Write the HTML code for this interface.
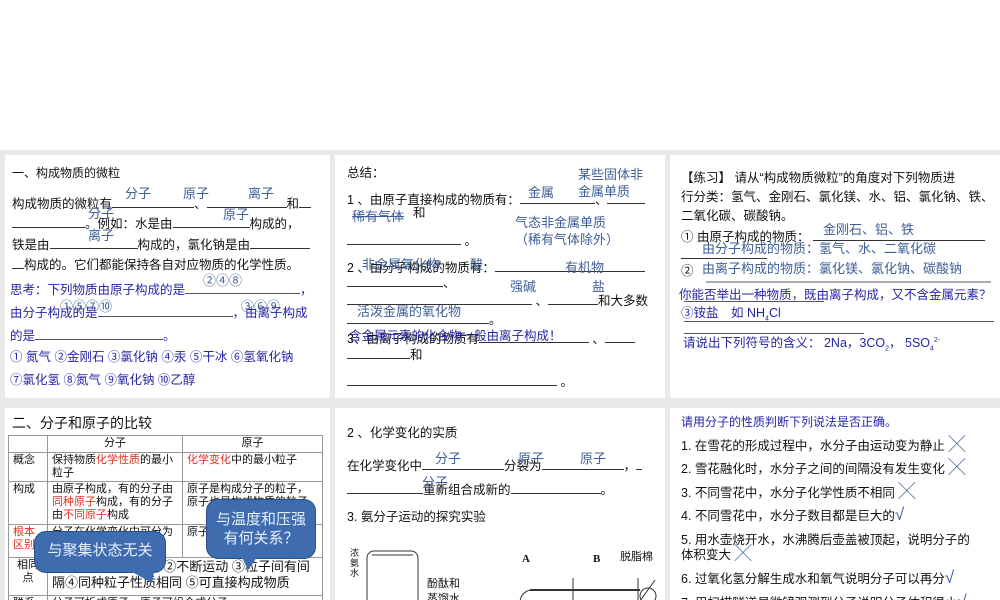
<!DOCTYPE html>
<html><head><meta charset="utf-8"><style>
body{margin:0;width:1000px;height:600px;background:#fff;position:relative;overflow:hidden;font-family:"Liberation Sans","Noto Sans CJK SC",sans-serif;color:#111}
.bg{position:absolute;left:0;top:150px;width:1000px;height:450px;background:#e9e9e9}
.p{position:absolute;background:#fff;overflow:hidden}
.t{position:absolute;white-space:nowrap;font-size:12.5px;line-height:16px}
.a{color:#3f5f96;font-size:13px}
.n{color:#2626a6}
.m{color:#3f5f96;font-size:17px;line-height:14px;font-weight:300}
u{text-decoration:none;border-bottom:1px solid #333;display:inline-block;height:13px;vertical-align:baseline}
table{position:absolute;border-collapse:collapse;font-size:11px;line-height:13px}
td{border:1px solid #999;padding:1px 4px;vertical-align:top}
.r{color:#e03020}
.bub{position:absolute;background:#3e6cae;border-radius:12px;color:#e6eeff;font-size:15px;text-align:center;border:1px solid #2b4f86}
</style></head><body>
<div class="bg"></div>

<!-- Panel 1 -->
<div class="p" style="left:5px;top:155px;width:325px;height:243px">
<div class="t" style="left:7px;top:10px;font-size:12px">一、构成物质的微粒</div>
<div class="t" style="left:7px;top:39px">构成物质的微粒有<u style="width:82px"></u>、<u style="width:80px"></u>和<u style="width:12px"></u></div>
<div class="t a" style="left:120px;top:31px">分子</div><div class="t a" style="left:178px;top:31px">原子</div><div class="t a" style="left:243px;top:31px">离子</div>
<div class="t" style="left:7px;top:59px"><u style="width:73px"></u>。例如：水是由<u style="width:77px"></u>构成的，</div>
<div class="t a" style="left:83px;top:51px">分子</div><div class="t a" style="left:218px;top:52px">原子</div>
<div class="t" style="left:7px;top:80px">铁是由<u style="width:88px"></u>构成的，氯化钠是由<u style="width:60px"></u></div>
<div class="t a" style="left:83px;top:73px">离子</div>
<div class="t" style="left:7px;top:100px"><u style="width:12px"></u>构成的。它们都能保持各自对应物质的化学性质。</div>
<div class="t n" style="left:5px;top:125px">思考：下列物质由原子构成的是<u style="width:115px;border-color:#555"></u>，</div>
<div class="t a" style="left:198px;top:118px">②④⑧</div>
<div class="t n" style="left:5px;top:148px">由分子构成的是<u style="width:135px;border-color:#555"></u>，由离子构成</div>
<div class="t a" style="left:55px;top:144px">①⑤⑦⑩</div><div class="t a" style="left:236px;top:144px">③⑥⑨</div>
<div class="t n" style="left:5px;top:171px">的是<u style="width:128px;border-color:#555"></u>。</div>
<div class="t n" style="left:5px;top:194px">① 氮气 ②金刚石 ③氯化钠 ④汞 ⑤干冰 ⑥氢氧化钠</div>
<div class="t n" style="left:5px;top:217px">⑦氯化氢 ⑧氮气 ⑨氧化钠 ⑩乙醇</div>
</div>

<!-- Panel 2 -->
<div class="p" style="left:335px;top:155px;width:330px;height:243px">
<div class="t" style="left:12px;top:10px">总结：</div>
<div class="t a" style="left:243px;top:12px">某些固体非</div><div class="t a" style="left:243px;top:29px">金属单质</div>
<div class="t" style="left:12px;top:35px">1 、由原子直接构成的物质有：<u style="width:75px"></u>、<u style="width:38px"></u></div>
<div class="t a" style="left:193px;top:30px">金属</div>
<div class="t a" style="left:17px;top:54px;text-decoration:line-through">稀有气体</div><div class="t" style="left:78px;top:50px">和</div>
<div class="t a" style="left:180px;top:60px">气态非金属单质</div><div class="t a" style="left:180px;top:77px">（稀有气体除外）</div>
<div class="t" style="left:12px;top:76px"><u style="width:114px"></u> 。</div>
<div class="t" style="left:12px;top:103px">2 、由分子构成的物质有：<u style="width:150px"></u></div>
<div class="t a" style="left:27px;top:102px">非金属氧化物</div><div class="t a" style="left:135px;top:102px">酸</div><div class="t a" style="left:230px;top:105px">有机物</div>
<div class="t" style="left:12px;top:118px"><u style="width:96px"></u>、</div>
<div class="t a" style="left:175px;top:124px">强碱</div><div class="t a" style="left:257px;top:124px">盐</div>
<div class="t" style="left:12px;top:136px"><u style="width:185px"></u> 、<u style="width:50px"></u>和大多数</div>
<div class="t a" style="left:22px;top:149px">活泼金属的氧化物</div>
<div class="t" style="left:12px;top:155px"><u style="width:142px"></u>。</div>
<div class="t" style="left:12px;top:174px">3、由离子构成的物质有<u style="width:110px"></u> 、<u style="width:30px"></u></div>
<div class="t n" style="left:14px;top:173px">含金属元素的化合物一般由离子构成！</div>
<div class="t" style="left:12px;top:190px"><u style="width:63px"></u>和</div>
<div class="t" style="left:12px;top:217px"><u style="width:210px"></u> 。</div>
</div>

<!-- Panel 3 -->
<div class="p" style="left:670px;top:155px;width:330px;height:243px">
<div class="t" style="left:11px;top:15px">【练习】 请从“构成物质微粒”的角度对下列物质进</div>
<div class="t" style="left:11px;top:34px">行分类：氢气、金刚石、氯化镁、水、铝、氯化钠、铁、</div>
<div class="t" style="left:11px;top:53px">二氧化碳、碳酸钠。</div>
<div class="t" style="left:11px;top:72px">① 由原子构成的物质： <u style="width:172px"></u></div>
<div class="t a" style="left:153px;top:67px">金刚石、铝、铁</div>
<div class="t" style="left:11px;top:90px"><u style="width:86px"></u></div>
<div class="t a" style="left:32px;top:86px">由分子构成的物质：氢气、水、二氧化碳</div>
<div class="t" style="left:11px;top:108px">②</div>
<div class="t a" style="left:32px;top:106px">由离子构成的物质：氯化镁、氯化钠、碳酸钠</div>
<div style="position:absolute;left:36px;top:126px;width:285px;height:2px;background:#aaa"></div>
<div class="t n" style="left:9px;top:132px">你能否举出一种物质，既由离子构成，又不含金属元素？</div>
<div style="position:absolute;left:14px;top:146px;width:140px;height:1px;background:#555"></div>
<div class="t n" style="left:11px;top:150px">③铵盐　如 NH<sub style="font-size:7px">4</sub>Cl</div>
<div style="position:absolute;left:14px;top:166px;width:310px;height:1px;background:#555"></div>
<div class="t n" style="left:13px;top:178px">请说出下列符号的含义： 2Na，3CO<sub style="font-size:7px">2</sub>， 5SO<sub style="font-size:7px">4</sub><sup style="font-size:7px">2-</sup></div>
<div style="position:absolute;left:14px;top:178px;width:180px;height:1px;background:#555"></div>
</div>

<!-- Panel 4 -->
<div class="p" style="left:5px;top:408px;width:325px;height:192px">
<div class="t" style="left:7px;top:7px;font-size:14px">二、分子和原子的比较</div>
<table style="left:3px;top:27px;width:315px">
<tr style="height:17px"><td style="width:30px"></td><td style="width:126px;text-align:center">分子</td><td style="text-align:center">原子</td></tr>
<tr style="height:29px"><td>概念</td><td>保持物质<span class="r">化学性质</span>的最小粒子</td><td><span class="r">化学变化</span>中的最小粒子</td></tr>
<tr style="height:43px"><td>构成</td><td>由原子构成，有的分子由<span class="r">同种原子</span>构成，有的分子由<span class="r">不同原子</span>构成</td><td>原子是构成分子的粒子，原子也是构成物质的粒子</td></tr>
<tr style="height:33px"><td class="r">根本区别</td><td>分子在化学变化中可分为</td><td>原子</td></tr>
<tr style="height:38px"><td style="text-align:center">相同点</td><td colspan="2" style="font-size:13px;line-height:16px">① 体积小、质量小 ②不断运动 ③粒子间有间隔④同种粒子性质相同 ⑤可直接构成物质</td></tr>
<tr><td>联系</td><td colspan="2">分子可拆成原子，原子可组合成分子</td></tr>
</table>
<div class="bub" style="left:29px;top:123px;width:130px;height:40px;line-height:38px">与聚集状态无关</div>
<svg style="position:absolute;left:60px;top:150px" width="100" height="30"><polygon points="60,10 90,10 87,25" fill="#3e6cae"/></svg>
<div class="bub" style="left:201px;top:91px;width:110px;height:60px;line-height:19px;padding-top:10px;box-sizing:border-box">与温度和压强<br>有何关系？</div>
<svg style="position:absolute;left:230px;top:140px" width="40" height="30"><polygon points="5,5 25,5 13,22" fill="#3e6cae"/></svg>
</div>

<!-- Panel 5 -->
<div class="p" style="left:335px;top:408px;width:330px;height:192px">
<div class="t" style="left:12px;top:17px">2 、化学变化的实质</div>
<div class="t" style="left:12px;top:48px">在化学变化中<u style="width:82px"></u>分裂为<u style="width:82px"></u>，<u style="width:6px"></u></div>
<div class="t a" style="left:100px;top:43px">分子</div><div class="t a" style="left:183px;top:43px">原子</div><div class="t a" style="left:245px;top:43px">原子</div>
<div class="t" style="left:12px;top:72px"><u style="width:76px"></u>重新组合成新的<u style="width:90px"></u>。</div>
<div class="t a" style="left:87px;top:67px">分子</div>
<div class="t" style="left:12px;top:101px">3. 氨分子运动的探究实验</div>
<svg style="position:absolute;left:0;top:120px" width="330" height="72" fill="none" stroke="#333">
<rect x="32" y="23" width="51" height="70" rx="7"/>
<line x1="37" y1="27" x2="78" y2="27"/>
<line x1="35" y1="80" x2="48" y2="80"/><line x1="68" y1="80" x2="82" y2="80"/>
<line x1="238" y1="50" x2="238" y2="80"/><line x1="303" y1="50" x2="303" y2="80"/>
<path d="M195 62 H305" stroke-width="2"/>
<path d="M195 62 Q185 65 185 75"/>
<circle cx="313" cy="68" r="8"/><line x1="305" y1="73" x2="320" y2="52"/>
<rect x="185" y="77" width="93" height="6"/>
</svg>
<div class="t" style="left:15px;top:140px;font-size:9px;line-height:10px;width:10px;white-space:normal">浓氨水</div>
<div class="t" style="left:92px;top:168px;font-size:11px">酚酞和</div>
<div class="t" style="left:92px;top:183px;font-size:11px">蒸馏水</div>
<div class="t" style="left:187px;top:143px;font-size:11px;font-family:'Liberation Serif',serif;font-weight:bold">A</div>
<div class="t" style="left:258px;top:143px;font-size:11px;font-family:'Liberation Serif',serif;font-weight:bold">B</div>
<div class="t" style="left:285px;top:141px;font-size:11px">脱脂棉</div>
</div>

<!-- Panel 6 -->
<div class="p" style="left:670px;top:408px;width:330px;height:192px">
<div class="t n" style="left:11px;top:6px;font-size:12px">请用分子的性质判断下列说法是否正确。</div>
<div class="t" style="left:11px;top:30px">1. 在雪花的形成过程中，水分子由运动变为静止 <span class="m">╳</span></div>
<div class="t" style="left:11px;top:53px">2. 雪花融化时，水分子之间的间隔没有发生变化 <span class="m">╳</span></div>
<div class="t" style="left:11px;top:77px">3. 不同雪花中，水分子化学性质不相同 <span class="m">╳</span></div>
<div class="t" style="left:11px;top:100px">4. 不同雪花中，水分子数目都是巨大的<span class="m">√</span></div>
<div class="t" style="left:11px;top:124px">5. 用水壶烧开水，水沸腾后壶盖被顶起，说明分子的</div>
<div class="t" style="left:11px;top:139px">体积变大 <span class="m">╳</span></div>
<div class="t" style="left:11px;top:163px">6. 过氧化氢分解生成水和氧气说明分子可以再分<span class="m">√</span></div>
<div class="t" style="left:11px;top:187px">7. 用扫描隧道显微镜观测到分子说明分子体积很小<span class="m">√</span></div>
</div>
</body></html>
